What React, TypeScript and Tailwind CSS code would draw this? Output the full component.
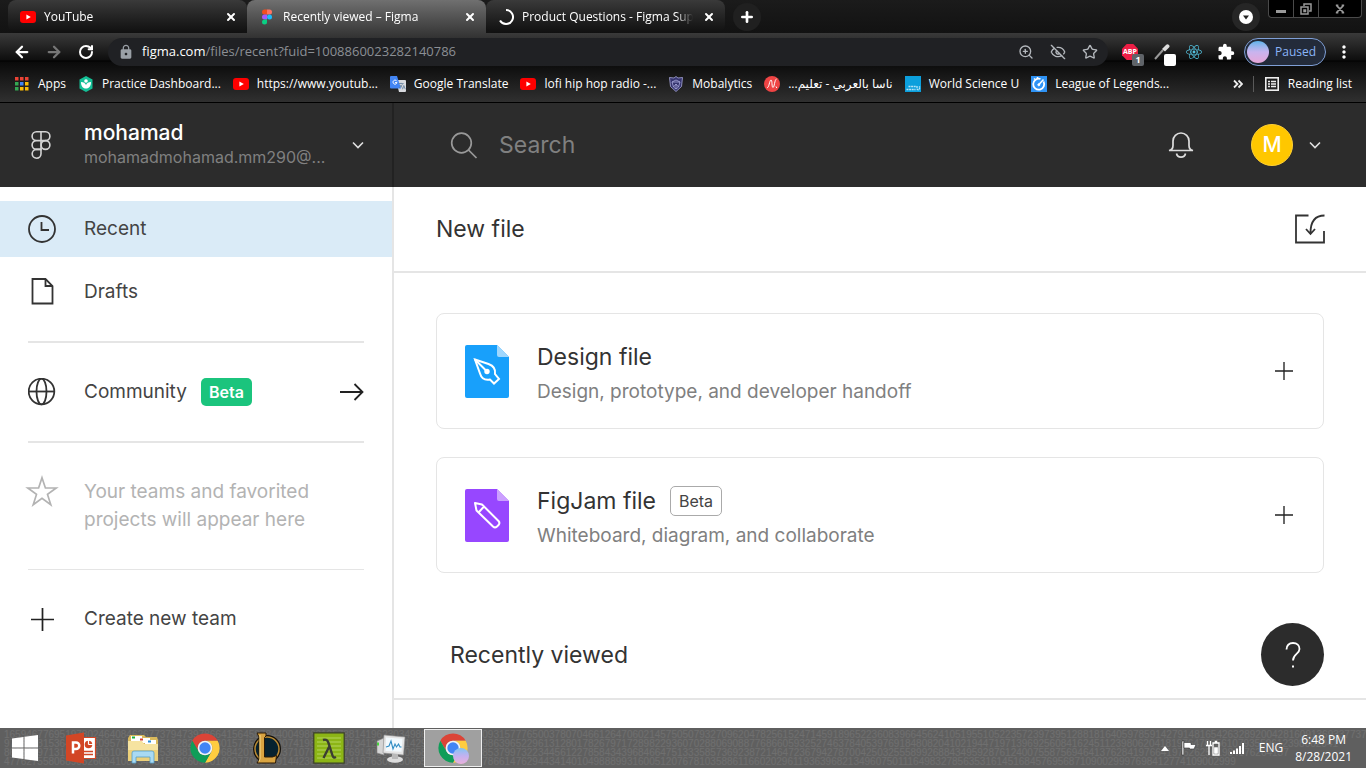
import type { ReactNode } from "react";
import {
  ArrowLeft,
  ArrowRight,
  EyeOff,
  Plus,
  RotateCw,
  Star,
  X,
  ZoomIn,
} from "lucide-react";
import { FaReact } from "react-icons/fa";
import { MdExtension, MdLock, MdMoreVert, MdTranslate } from "react-icons/md";

function YouTubeIcon() {
  return (
    <svg viewBox="0 0 16 16" className="size-4 shrink-0">
      <rect y="2" width="16" height="12" rx="3" fill="#f00" />
      <path d="M6.4 5.4v5.2L10.8 8z" fill="#fff" />
    </svg>
  );
}

function FigmaIcon() {
  return (
    <svg viewBox="0 0 16 16" className="size-4 shrink-0">
      <path d="M8 .5H5.500a2.500 2.500 0 0 0 0 5H8z" fill="#f24e1e" />
      <path d="M8 .5h2.500a2.500 2.500 0 0 1 0 5H8z" fill="#ff7262" />
      <path d="M8 5.500H5.500a2.500 2.500 0 0 0 0 5H8z" fill="#a259ff" />
      <circle cx="10.500" cy="8" r="2.500" fill="#1abcfe" />
      <path d="M5.500 10.500a2.500 2.500 0 1 0 2.500 2.500v-2.500z" fill="#0acf83" />
    </svg>
  );
}

function SpinnerIcon() {
  return (
    <svg viewBox="0 0 16 16" className="size-4 shrink-0" fill="none" stroke="#fff" strokeWidth="2">
      <path d="M8 1a7 7 0 1 1-6 10.600" />
    </svg>
  );
}

function AppsIcon() {
  const colors = ["#ea4335", "#ea4335", "#ea4335", "#34a853", "#4285f4", "#fbbc05", "#34a853", "#fbbc05", "#fbbc05"];
  return (
    <svg viewBox="0 0 16 16" className="size-4 shrink-0">
      {colors.map((color, i) => (
        <rect key={i} x={1 + (i % 3) * 5} y={1 + Math.floor(i / 3) * 5} width="3.500" height="3.500" fill={color} />
      ))}
    </svg>
  );
}

function PracticeIcon() {
  return (
    <svg viewBox="0 0 16 16" className="size-4 shrink-0">
      <path d="M8 0l6.500 3.500v9L8 16l-6.500-3.500v-9z" fill="#14bf96" />
      <circle cx="8" cy="5" r="1.800" fill="#fff" />
      <path d="M3 6c2.500 0 4.300 1.200 5 3 .7-1.800 2.500-3 5-3 0 4-1.800 6.500-5 6.500S3 10 3 6z" fill="#fff" />
    </svg>
  );
}

function TranslateIcon() {
  return (
    <span className="relative size-4 shrink-0">
      <svg viewBox="0 0 16 16" className="size-4">
        <path d="M6 4h9a1 1 0 0 1 1 1v10a1 1 0 0 1-1 1H9z" fill="#d8dade" />
        <path d="M1 0h6l4 12.500H1a1 1 0 0 1-1-1V1a1 1 0 0 1 1-1z" fill="#4285f4" />
        <path d="M6.800 5.200A2 2 0 1 0 7 6.600H5" fill="none" stroke="#fff" strokeWidth="1" />
      </svg>
      <MdTranslate className="absolute right-0 bottom-0.5 size-2 text-[#607d9b]" />
    </span>
  );
}

function MobalyticsIcon() {
  return (
    <svg viewBox="0 0 16 16" className="size-4 shrink-0" stroke="#a9a9dc" strokeWidth=".8">
      <path d="M8 .5l2 1.500L14.500 1.500l-1 9L8 15.500 2.500 10.500l-1-9L6 2z" fill="#35346e" />
      <path d="M8 4l4 2-1.500 5L8 13l-2.500-2L4 6zM4 6h8M8 13V8M5.500 11L8 8l2.500 3" fill="none" />
    </svg>
  );
}

function NasaArabicIcon() {
  return (
    <svg viewBox="0 0 16 16" className="size-4 shrink-0">
      <circle cx="8" cy="8" r="8" fill="#ef4444" />
      <path d="M3 11.500c2 1 2.500-7.500 4-7.500s.5 7.500 2 7.500 1.500-8 3.500-8.500M12 10.500l.8 1.500" fill="none" stroke="#fff" strokeWidth="1" />
    </svg>
  );
}

function ScienceIcon() {
  return (
    <svg viewBox="0 0 16 16" className="size-4 shrink-0">
      <rect width="16" height="16" fill="#0c9fdc" />
      <path d="M3.500 10.500h8M1.500 13.500h9M12 10v2.500a1.200 1.200 0 0 0 2.500 0V10" fill="none" stroke="#b5e3f7" strokeWidth="1.300" strokeDasharray="2 .6" />
    </svg>
  );
}

function GaugeIcon() {
  return (
    <svg viewBox="0 0 16 16" className="size-4 shrink-0" fill="none" stroke="#fff">
      <rect width="16" height="16" fill="#2f93f5" stroke="none" />
      <path d="M12.500 5.500A5.500 5.500 0 1 1 9.500 3" strokeWidth="1.800" />
      <path d="M7.500 9L12.500 3.500M3 2.500l1 1M6.500 1v1.200" strokeWidth="1.500" />
      <circle cx="7.800" cy="8.800" r="1" fill="#fff" />
    </svg>
  );
}

function ReadingListIcon() {
  return (
    <svg viewBox="0 0 16 16" className="size-4 shrink-0" fill="none" stroke="#eee">
      <rect x="1.800" y="1.800" width="12.400" height="12.400" strokeWidth="1.600" />
      <path d="M4 5.500h2M7 5.500h5M4 8h2M7 8h5M4 10.500h2M7 10.500h5" strokeWidth="1.400" />
    </svg>
  );
}

function ChromeIcon() {
  return (
    <svg viewBox="0 0 48 48" className="size-8">
      <path d="M24 13h19A22 22 0 0 0 5 13l9.500 16.500A11 11 0 0 1 24 13z" fill="#db4437" />
      <path d="M33.500 29.500L24 46A22 22 0 0 0 43 13H24a11 11 0 0 1 9.500 16.500z" fill="#ffcd40" />
      <path d="M14.500 29.500L5 13a22 22 0 0 0 19 33l9.500-16.500a11 11 0 0 1-19 0z" fill="#0f9d58" />
      <circle cx="24" cy="24" r="11" fill="#f4f4f4" />
      <circle cx="24" cy="24" r="8.500" fill="#4285f4" />
    </svg>
  );
}

const tabs = [
  { title: "YouTube", icon: <YouTubeIcon />, active: false },
  { title: "Recently viewed – Figma", icon: <FigmaIcon />, active: true },
  { title: "Product Questions - Figma Support", icon: <SpinnerIcon />, active: false },
];

const bookmarks = [
  { label: "Apps", icon: <AppsIcon /> },
  { label: "Practice Dashboard...", icon: <PracticeIcon /> },
  { label: "https://www.youtub...", icon: <YouTubeIcon /> },
  { label: "Google Translate", icon: <TranslateIcon /> },
  { label: "lofi hip hop radio -...", icon: <YouTubeIcon /> },
  { label: "Mobalytics", icon: <MobalyticsIcon /> },
  { label: "ناسا بالعربي - تعليم...", icon: <NasaArabicIcon />, rtl: true },
  { label: "World Science U", icon: <ScienceIcon /> },
  { label: "League of Legends...", icon: <GaugeIcon /> },
];

function TabStrip() {
  return (
    <div className="flex h-[33px] items-center bg-linear-to-b from-[#1b1b1b] to-[#121212] pl-2">
      {tabs.map((tab) => (
        <div
          key={tab.title}
          className={
            tab.active
              ? "flex h-full w-[239px] items-center gap-2 rounded-t-lg bg-linear-to-b from-[#707070] to-[#3a3a3a] pr-2 pl-3"
              : "flex h-full w-[239px] items-center gap-2 rounded-lg bg-linear-to-b from-[#3a3a3a] to-[#101010] pr-2 pl-3"
          }
        >
          {tab.icon}
          <span className="min-w-0 flex-1 overflow-hidden mask-r-from-90% whitespace-nowrap">{tab.title}</span>
          <button aria-label="Close tab" className="grid size-4 place-items-center">
            <X className="size-3 text-white" strokeWidth={4} />
          </button>
        </div>
      ))}
      <button aria-label="New tab" className="ml-2 grid size-7 place-items-center rounded-full bg-[#202020]">
        <Plus className="size-4" strokeWidth={4} />
      </button>
      <button aria-label="Search tabs" className="mr-2 ml-auto grid size-7 place-items-center rounded-full bg-[#262626]">
        <svg viewBox="0 0 14 14" className="size-3.5">
          <circle cx="7" cy="7" r="7" fill="#fff" />
          <path d="M4 5.500h6L7 9.500z" fill="#222" />
        </svg>
      </button>
      <div className="mr-1 flex h-[18px] self-start rounded-b-sm border border-t-0 border-[#4a4a4a] bg-black text-[#999]">
        <button aria-label="Minimize" className="grid w-[25px] place-items-center border-r border-[#4a4a4a]">
          <svg viewBox="0 0 12 12" className="size-3" fill="currentColor">
            <path d="M1 7h10v3H1z" />
          </svg>
        </button>
        <button aria-label="Restore" className="grid w-[25px] place-items-center border-r border-[#4a4a4a]">
          <svg viewBox="0 0 12 12" className="size-3" fill="none" stroke="currentColor" strokeWidth="1.500">
            <path d="M4 3V1h7v7H9M1 4h7v7H1z" />
            <path d="M4 7h1.500v1.500H4z" />
          </svg>
        </button>
        <button aria-label="Close" className="grid w-[42px] place-items-center">
          <svg viewBox="0 0 12 12" className="size-2.5" fill="none" stroke="currentColor" strokeWidth="2">
            <path d="M2 2l8 8M10 2l-8 8M1 1.500h3M8 1.500h3M1 10.500h3M8 10.500h3" />
          </svg>
        </button>
      </div>
    </div>
  );
}

function ToolbarButton({ label, children }: { label: string; children: ReactNode }) {
  return (
    <button aria-label={label} className="grid h-7 w-8 shrink-0 place-items-center">
      {children}
    </button>
  );
}

function Toolbar() {
  return (
    <div className="flex h-[37px] items-center px-1.5">
      <ToolbarButton label="Back">
        <ArrowLeft className="size-[18px]" strokeWidth={3} />
      </ToolbarButton>
      <ToolbarButton label="Forward">
        <ArrowRight className="size-[18px] text-[#777]" strokeWidth={3} />
      </ToolbarButton>
      <ToolbarButton label="Reload">
        <RotateCw className="size-4" strokeWidth={3} />
      </ToolbarButton>
      <div className="mx-1.5 flex h-7 flex-1 items-center rounded-full bg-[#202124] pl-2.5 text-[#b4b8bd]">
        <MdLock className="mr-2 size-4 text-[#9aa0a6]" />
        <div className="flex-1 text-[13px] text-[#8b8f94]">
          <span className="text-white">figma.com</span>/files/recent?fuid=1008860023282140786
        </div>
        <ToolbarButton label="Zoom">
          <ZoomIn className="size-4" />
        </ToolbarButton>
        <ToolbarButton label="Cookies blocked">
          <EyeOff className="size-4" />
        </ToolbarButton>
        <ToolbarButton label="Bookmark this page">
          <Star className="size-4" />
        </ToolbarButton>
        <span className="w-0.5" />
      </div>
      <ToolbarButton label="AdBlock Plus">
        <span className="relative">
          <svg viewBox="0 0 16 16" className="size-4">
            <path d="M4.700 0h6.600L16 4.700v6.600L11.300 16H4.700L0 11.300V4.700z" fill="#ed1e45" />
          </svg>
          <span className="absolute inset-0 text-center text-[7px] leading-4 font-bold">ABP</span>
          <span className="absolute top-2.5 left-2.5 h-3 w-3 rounded-xs bg-[#5f6368] text-center text-[9px] leading-3 font-bold">
            1
          </span>
        </span>
      </ToolbarButton>
      <ToolbarButton label="Color picker">
        <span className="relative">
          <svg viewBox="0 0 16 16" className="size-4">
            <path d="M1 15l8-9" stroke="#999" strokeWidth="2" />
            <path d="M8 5l4-4a1.500 1.500 0 0 1 3 2.500l-4 4z" fill="#ddd" />
          </svg>
          <span className="absolute top-2.5 left-2.5 size-3 rounded-xs bg-white" />
        </span>
      </ToolbarButton>
      <ToolbarButton label="React Developer Tools">
        <FaReact className="size-4 text-[#53c1de]" />
      </ToolbarButton>
      <ToolbarButton label="Extensions">
        <MdExtension className="size-[18px]" />
      </ToolbarButton>
      <button className="mx-0.5 flex h-7 w-[82px] items-center gap-1.5 rounded-full border border-[#7f9fd6] bg-[#232b3a] pl-0.5 text-[#8ab4f8]">
        <span className="size-[22px] rounded-full bg-linear-to-b from-[#5cb3ea] via-[#c9b4ee] to-[#e6a6d8]" />
        Paused
      </button>
      <ToolbarButton label="Menu">
        <MdMoreVert className="size-5" />
      </ToolbarButton>
    </div>
  );
}

function BookmarksBar() {
  return (
    <nav className="flex h-[33px] items-center gap-3 border-b border-black px-3.5 pb-1 whitespace-nowrap">
      {bookmarks.map((bookmark) => (
        <a key={bookmark.label} href="#" className="flex items-center gap-2">
          {bookmark.icon}
          <span dir={bookmark.rtl ? "rtl" : "ltr"}>{bookmark.label}</span>
        </a>
      ))}
      <div className="ml-auto flex items-center">
        <button aria-label="More bookmarks" className="mr-2.5">
          <svg viewBox="0 0 10 10" className="size-2.5" fill="none" stroke="#eee" strokeWidth="1.800">
            <path d="M1 1.500L4.500 5 1 8.500M5.500 1.500L9 5 5.500 8.500" />
          </svg>
        </button>
        <span className="mr-2.5 h-4 w-px bg-[#5a5a5a]" />
        <button className="flex items-center gap-2">
          <ReadingListIcon />
          Reading list
        </button>
      </div>
    </nav>
  );
}

function ChevronIcon() {
  return (
    <svg viewBox="0 0 12 8" className="h-2 w-3" fill="none" stroke="#e0e0e0" strokeWidth="1.600">
      <path d="M1 1.500l5 5 5-5" />
    </svg>
  );
}

function PlusIcon({ className }: { className: string }) {
  return (
    <svg viewBox="0 0 24 24" className={className} fill="none" stroke="#222" strokeWidth="1.800">
      <path d="M12 0v24M0 12h24" />
    </svg>
  );
}

function AppHeader() {
  return (
    <header className="flex h-[84px] bg-[#2c2c2c] text-white">
      <button className="flex w-[394px] shrink-0 items-center border-r-2 border-[#222] px-7 text-left">
        <svg viewBox="0 0 28 28" className="mr-7 size-7" fill="none" stroke="#d4d4d4" strokeWidth="1.600">
          <path d="M13 .8H8.500a4.400 4.400 0 0 0 0 8.800H13zM13 .8h4.500a4.400 4.400 0 0 1 0 8.800H13zM13 9.600H8.500a4.400 4.400 0 0 0 0 8.800H13z" />
          <circle cx="17.500" cy="14" r="4.400" />
          <path d="M13 18.400H8.500a4.400 4.400 0 1 0 4.500 4.400z" />
        </svg>
        <span className="min-w-0 flex-1">
          <span className="block text-[21px] leading-6 font-medium">mohamad</span>
          <span className="block text-[16px] leading-6 text-[#808080]">mohamadmohamad.mm290@...</span>
        </span>
        <ChevronIcon />
      </button>
      <div className="flex flex-1 items-center pr-[45px] pl-14">
        <svg viewBox="0 0 28 28" className="size-7" fill="none" stroke="#999" strokeWidth="1.700">
          <circle cx="11.500" cy="12" r="9.800" />
          <path d="M18.500 19l8 8" />
        </svg>
        <input
          type="text"
          aria-label="Search"
          placeholder="Search"
          className="ml-[21px] min-w-0 flex-1 bg-transparent text-[23px] outline-none placeholder:text-[#808080]"
        />
        <button aria-label="Notifications" className="mr-14">
          <svg viewBox="0 0 28 28" className="size-7" fill="none" stroke="#ddd" strokeWidth="1.700">
            <path d="M2 19.500c2.500-.5 4-2 4-5v-4.500a8 8 0 0 1 16 0v4.500c0 3 1.500 4.500 4 5z" />
            <path d="M9.500 22.500a4.600 4.600 0 0 0 9 0" />
          </svg>
        </button>
        <button className="flex items-center gap-4" aria-label="Account">
          <span className="grid size-[42px] place-items-center rounded-full border border-[#ffd033] bg-[#ffc700] text-[21px] font-medium">
            M
          </span>
          <ChevronIcon />
        </button>
      </div>
    </header>
  );
}

function SidebarItem({ icon, active, children }: { icon: ReactNode; active?: boolean; children: ReactNode }) {
  return (
    <a
      href="#"
      className={active ? "flex h-14 items-center gap-7 bg-[#daebf7] px-7" : "flex h-14 items-center gap-7 px-7"}
    >
      {icon}
      {children}
    </a>
  );
}

function Sidebar() {
  return (
    <aside className="w-[394px] shrink-0 border-r-2 border-[#e5e5e5] pt-3.5 text-[19px] text-[#444]">
      <SidebarItem
        active
        icon={
          <svg viewBox="0 0 28 28" className="size-7" fill="none" stroke="#333" strokeWidth="1.800">
            <circle cx="14" cy="14" r="13" />
            <path d="M13.500 7v8H21" />
          </svg>
        }
      >
        Recent
      </SidebarItem>
      <div className="mt-[7px]">
        <SidebarItem
          icon={
            <svg viewBox="0 0 28 28" className="size-7" fill="none" stroke="#333" strokeWidth="1.800">
              <path d="M4.500 1h13l7 7v17.500h-20z" />
              <path d="M17.500 1v7h7" />
            </svg>
          }
        >
          Drafts
        </SidebarItem>
      </div>
      <hr className="mx-7 my-[21px] border-t-2 border-[#e5e5e5]" />
      <SidebarItem
        icon={
          <svg viewBox="0 0 28 28" className="size-7" fill="none" stroke="#333" strokeWidth="1.800">
            <circle cx="13.500" cy="13.500" r="12.800" />
            <ellipse cx="13.500" cy="13.500" rx="5" ry="12.800" />
            <path d="M.7 13.500h25.600" />
          </svg>
        }
      >
        <span className="flex flex-1 items-center gap-3.5">
          Community
          <span className="rounded-[5px] bg-[#1bc47d] px-2 text-[16px] leading-7 font-semibold text-white">Beta</span>
          <svg viewBox="0 0 24 18" className="ml-auto h-[18px] w-6" fill="none" stroke="#222" strokeWidth="1.800">
            <path d="M0 9h22.500M14.500 1l8 8-8 8" />
          </svg>
        </span>
      </SidebarItem>
      <hr className="mx-7 my-[21px] border-t-2 border-[#e5e5e5]" />
      <div className="flex gap-7 px-7 py-3.5 text-[#b3b3b3]">
        <svg viewBox="0 0 28 28" className="size-7 overflow-visible" fill="none" stroke="currentColor" strokeWidth="1.700">
          <path d="M14-.2l3.400 10.200h10.800l-8.700 6.400 3.300 10.400L14 20.400l-8.800 6.400 3.300-10.400L-.2 10h10.800z" />
        </svg>
        <p className="leading-7">
          Your teams and favorited
          <br />
          projects will appear here
        </p>
      </div>
      <hr className="mx-7 my-[21px] border-[#e5e5e5]" />
      <SidebarItem
        icon={
          <span className="grid size-7 place-items-center">
            <PlusIcon className="size-[23px]" />
          </span>
        }
      >
        Create new team
      </SidebarItem>
    </aside>
  );
}

type CardProps = {
  title: string;
  description: string;
  icon: ReactNode;
  beta?: boolean;
};

function NewFileCard({ title, description, icon, beta }: CardProps) {
  return (
    <button className="flex items-center gap-7 rounded-lg border border-[#e5e5e5] px-7 py-[22px] text-left">
      {icon}
      <span className="flex-1">
        <span className="flex h-[42px] items-center gap-3.5 text-[23px] text-[#333]">
          {title}
          {beta && (
            <span className="rounded-[5px] border border-[#aaa] px-2 text-[16px] leading-7 text-[#444]">
              Beta
            </span>
          )}
        </span>
        <span className="block text-[19px] leading-7 text-[#808080]">{description}</span>
      </span>
      <PlusIcon className="mr-0.5 size-[18px]" />
    </button>
  );
}

function DesignFileIcon() {
  return (
    <svg viewBox="0 0 44 53" className="h-[53px] w-11 shrink-0">
      <path d="M2 0h30l12 12v39a2 2 0 0 1-2 2H2a2 2 0 0 1-2-2V2a2 2 0 0 1 2-2z" fill="#18a0fb" />
      <path d="M32 0l12 12H34a2 2 0 0 1-2-2z" fill="#a0d7fd" />
      <g fill="none" stroke="#fff" strokeWidth="2">
        <path d="M10 14.500l13.500 4.500c5 1.800 7.300 5 6.500 10l4 5-5 4.500-4-4c-5 1-8.500-1-10-6z" />
        <path d="M10 14.500l11 11" />
      </g>
      <circle cx="22" cy="26.500" r="2.700" fill="#fff" />
    </svg>
  );
}

function FigJamFileIcon() {
  return (
    <svg viewBox="0 0 44 53" className="h-[53px] w-11 shrink-0">
      <path d="M2 0h30l12 12v39a2 2 0 0 1-2 2H2a2 2 0 0 1-2-2V2a2 2 0 0 1 2-2z" fill="#9747ff" />
      <path d="M32 0l12 12H34a2 2 0 0 1-2-2z" fill="#cb9fff" />
      <path
        d="M10 14l7 1.500L33.500 32q1.800 2 0 4l-1.500 1.500q-2 1.800-4 0L11.500 21.500zM19 17.500L14 23"
        fill="none"
        stroke="#fff"
        strokeWidth="2"
        strokeLinejoin="round"
      />
    </svg>
  );
}

function FilesPage() {
  return (
    <main className="min-w-0 flex-1 text-[#333]">
      <div className="flex h-[86px] items-center justify-between border-b-2 border-[#e5e5e5] px-[42px]">
        <h2 className="text-[23px]">New file</h2>
        <button aria-label="Import file">
          <svg viewBox="0 0 28 28" className="size-7 overflow-visible" fill="none" stroke="#333" strokeWidth="1.800">
            <path d="M12.500.5H0v27h28V16" />
            <path d="M28.500.5C20 .5 14.500 5 14.500 18M10 14l4.500 5 4.500-5" />
          </svg>
        </button>
      </div>
      <div className="flex flex-col gap-7 px-[42px] py-10">
        <NewFileCard
          title="Design file"
          description="Design, prototype, and developer handoff"
          icon={<DesignFileIcon />}
        />
        <NewFileCard
          title="FigJam file"
          description="Whiteboard, diagram, and collaborate"
          icon={<FigJamFileIcon />}
          beta
        />
      </div>
      <div className="flex h-[87px] items-center border-b-2 border-[#e5e5e5] px-14">
        <h2 className="text-[23px]">Recently viewed</h2>
      </div>
    </main>
  );
}

function WindowsIcon() {
  return (
    <svg viewBox="0 0 26 26" className="size-[26px]" fill="#fff">
      <path d="M0 3.500L11.500 2v10.500H0zM12.500 1.800L26 0v12.500H12.500zM0 13.500h11.500V24L0 22.500zM12.500 13.500H26V26l-13.500-1.800z" />
    </svg>
  );
}

function PowerPointIcon() {
  return (
    <svg viewBox="0 0 32 32" className="size-8">
      <path d="M17 5.500h13.500v21H17z" fill="#fff" stroke="#d24625" strokeWidth="1.200" />
      <circle cx="23.500" cy="12.500" r="3.800" fill="#d24625" />
      <path d="M23.500 12.500V8M23.500 12.500H28" stroke="#fff" strokeWidth="1.200" />
      <path d="M19 19.500h9M19 22.500h9" stroke="#d24625" strokeWidth="1.400" />
      <path d="M1 3.500L19 .5v31l-18-3z" fill="#d24625" />
      <path d="M8 21.500v-11h3a3.300 3.300 0 0 1 0 6.600H8" fill="none" stroke="#fff" strokeWidth="2.500" />
    </svg>
  );
}

function ExplorerIcon() {
  return (
    <svg viewBox="0 0 32 32" className="size-8">
      <path d="M1 6l2-3h14l2 2h11l1 3v19H1z" fill="#d9b95c" />
      <path d="M4 4h11v5H4zM12 6h11v5H12zM18 8h11v5H18z" fill="#fff" />
      <path d="M5 4.500h3v2H5z" fill="#1fae3d" />
      <path d="M13 6.500h3v2h-3z" fill="#d8412f" />
      <path d="M21 8.500h3v2h-3z" fill="#2d8ed8" />
      <path d="M1 9h14l2 3h14v17H1z" fill="#f6e3a0" />
      <path d="M1 18h30v11H1z" fill="#ecd07a" />
      <path d="M5 31V21a2 2 0 0 1 2-2h18a2 2 0 0 1 2 2v10h-4v-6H9v6z" fill="#a9daf3" stroke="#559fc6" strokeWidth=".8" />
    </svg>
  );
}

function LeagueIcon() {
  return (
    <svg viewBox="0 0 32 32" className="size-8">
      <circle cx="16" cy="17" r="13" fill="#06222f" stroke="#14100a" strokeWidth="2" />
      <circle cx="16" cy="17" r="12" fill="none" stroke="#b98a35" strokeWidth="1.500" />
      <path d="M6 1h9v3l-1.500 1.500V25h8l4-1.500L24.500 31H6l2-3V5z" fill="#d9a441" stroke="#2a1905" strokeWidth="1" />
      <path d="M9 3v24l-1 2.500" fill="none" stroke="#f6dc8b" strokeWidth="1" />
    </svg>
  );
}

function LambdaIcon() {
  return (
    <svg viewBox="0 0 32 32" className="size-8">
      <path d="M.8.8h30.400v30.400H.8z" fill="#8cb516" stroke="#3a3f2a" strokeWidth="1.200" />
      <path d="M4 6h24M4 10h24M4 14h24M4 18h24M4 22h24M4 26h24" stroke="#a6ca46" strokeWidth="1.600" />
      <path d="M10 8c3-1 4.500 0 5.500 3l4 12.500c.6 2 1.600 2.500 3.500 1.500M16.500 14L10.500 26" fill="none" stroke="#3b3d33" strokeWidth="2.400" />
    </svg>
  );
}

function MonitorIcon() {
  return (
    <svg viewBox="0 0 32 32" className="size-8">
      <path d="M2 9l7-3v17l-7-2z" fill="#d5d5d5" stroke="#888" strokeWidth=".6" />
      <path d="M3 10.500v3" stroke="#3ad32f" strokeWidth="1.800" />
      <path d="M9 3l21 2-1.500 18L8 21z" fill="#e4e4e4" stroke="#8d8d8d" strokeWidth=".6" />
      <path d="M11 5.500l16.500 1.300-1 13L10.500 19z" fill="#f2f9fd" />
      <path d="M11 15l3-1 2-5 2 8 2-5 1.500 3 2-3 1.500 3 1.500 0" fill="none" stroke="#2f8cc4" strokeWidth="1.100" />
      <ellipse cx="20" cy="27.500" rx="8" ry="3.200" fill="#dcdcdc" />
      <path d="M17 22h6v5h-6z" fill="#b9b9b9" />
    </svg>
  );
}

const taskbarApps = [
  { name: "PowerPoint", icon: <PowerPointIcon /> },
  { name: "File Explorer", icon: <ExplorerIcon /> },
  { name: "Google Chrome", icon: <ChromeIcon /> },
  { name: "League of Legends", icon: <LeagueIcon /> },
  { name: "Lambda", icon: <LambdaIcon /> },
  { name: "System monitor", icon: <MonitorIcon /> },
];

// Faint number wallpaper that shows through the taskbar
const digitRows = [
  "165946776951978024640846267737947397866415645878440049862105788141962303498617712303230931577765003780704661264706021457505079327096204782561524714591896522360839664562410519551052235723973951288181640597859142791481654263289200428160913693377372229",
  "971620815364571920957164371351928257388015745806800741986298007341203420142942917039079863965229613128017826797172898229360702880690887768660593252746378405397691848082041021944719713969256084162451123980620418197647825610793559612398062041",
  "866542971310872641010689427153688125749684207498203710761582476914085025085864447753798537997322344561227858434396846647513335857369238721464723679427870042503255589926884349592876124007558756946413762841976641976262561984376264137",
  "477627558068905260941087944315826609701809770025491442386577604197630645066533985738867866147629443414010498889931600512076781035886116602029611936396821349607501116498327856353161451684576956871090029997698412774109002999",
];

function Taskbar() {
  return (
    <footer className="relative flex h-10 items-center overflow-hidden bg-[#5f5f5f] font-['Open_Sans','Noto_Sans',sans-serif] text-[12px] text-white">
      <div
        aria-hidden="true"
        className="absolute inset-0 pt-0.5 pl-1 font-['Liberation_Sans',sans-serif] text-[10px] leading-[9px] whitespace-nowrap text-white/10"
      >
        {digitRows.map((row) => (
          <div key={row}>{row}</div>
        ))}
      </div>
      <button aria-label="Start" className="relative grid h-full w-[50px] place-items-center">
        <WindowsIcon />
      </button>
      {taskbarApps.map((app) => (
        <button key={app.name} aria-label={app.name} className="relative grid h-full w-[62px] place-items-center">
          {app.icon}
        </button>
      ))}
      <button
        aria-label="Google Chrome, active window"
        className="relative ml-0.5 grid h-[38px] w-[58px] place-items-center border border-[#eee] bg-[#a0a0a0]"
      >
        <ChromeIcon />
        <span className="absolute right-3 bottom-0.5 size-4 rounded-full bg-linear-to-b from-[#7cc4f3] via-[#c3b1f0] to-[#e9b0dc]" />
      </button>
      <div className="relative ml-auto flex items-center pr-3.5">
        <button aria-label="Show hidden icons" className="mr-3">
          <svg viewBox="0 0 8 5" className="h-[5px] w-2">
            <path d="M4 0l4 5H0z" fill="#fff" />
          </svg>
        </button>
        <svg viewBox="0 0 16 16" className="mr-2 size-4" stroke="#333" strokeWidth=".6">
          <path d="M1 1h1.800v14H1z" fill="#fff" />
          <path d="M3 2.500h7v2h5L13 9H8.500V8H3z" fill="#fff" />
        </svg>
        <svg viewBox="0 0 16 16" className="mr-2 size-4" fill="none" stroke="#fff" strokeWidth="1.300">
          <path d="M8 3h6v12H8zM9.800 1.500h2.400M2.500 1v4M5.500 1v4M1 5.500h6M4 6v9" />
          <path d="M9.800 8h2.400v5.200H9.800z" fill="#fff" />
        </svg>
        <svg viewBox="0 0 16 16" className="mr-3.5 size-4" fill="#fff">
          <path d="M1 12h2v2H1zM4 10.500h2V14H4zM7 8.500h2V14H7zM10 6h2v8h-2zM13 3h2v11h-2z" />
        </svg>
        <span className="mr-3">ENG</span>
        <time className="text-center leading-[17px]">
          6:48 PM
          <br />
          8/28/2021
        </time>
      </div>
    </footer>
  );
}

export default function App() {
  return (
    <div className="flex min-h-screen flex-col bg-white font-['Inter',sans-serif]">
      <div className="bg-[linear-gradient(to_bottom,#3a3a3a_33px,#0e0e0e_60px,#000_61px,#0a0a0a_62px,#303030_102px)] font-['Open_Sans','Noto_Sans','DejaVu_Sans',sans-serif] text-[12px] text-white">
        <TabStrip />
        <Toolbar />
        <BookmarksBar />
      </div>
      <AppHeader />
      <div className="relative flex flex-1">
        <Sidebar />
        <FilesPage />
        <button
          aria-label="Help"
          className="absolute right-[42px] bottom-[42px] grid size-[63px] place-items-center rounded-full bg-[#2c2c2c]"
        >
          <svg viewBox="0 0 16 26" className="h-[26px] w-4" fill="none" stroke="#fff" strokeWidth="1.800">
            <path d="M1.500 7.500C1.500 3.500 4 1 8 1s6.500 2.500 6.500 6c0 5-6.500 5-6.500 11.500" />
            <path d="M7 24.500h2" strokeWidth="2" />
          </svg>
        </button>
      </div>
      <Taskbar />
    </div>
  );
}
